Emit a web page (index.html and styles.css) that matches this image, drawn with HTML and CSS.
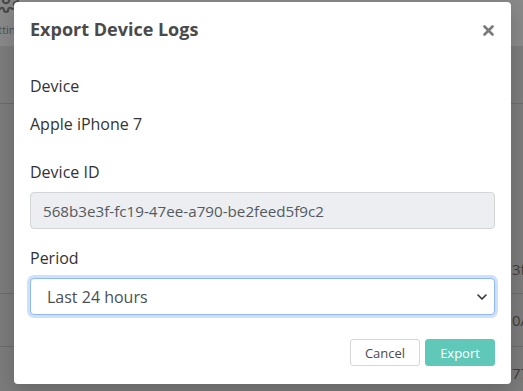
FILE: index.html
```html
<!DOCTYPE html>
<html lang="en">

<head>
    <meta charset="UTF-8">
    <meta name="viewport" content="width=device-width, initial-scale=1.0">
    <title>Export Device Logs</title>
    <link rel="stylesheet" href="styles.css">
</head>

<body>
    <div class="page">
        <div class="topbar">
            <div class="nav-item">
                <svg class="gear" width="26" height="26" viewBox="0 0 24 24" fill="none" stroke="currentColor" stroke-width="2" stroke-linecap="round" stroke-linejoin="round">
                    <circle cx="12" cy="12" r="3"></circle>
                    <path d="M19.4 15a1.65 1.65 0 0 0 .33 1.820l.06.06a2 2 0 1 1-2.83 2.83l-.06-.06a1.65 1.65 0 0 0-1.82-.33 1.65 1.65 0 0 0-1 1.51V21a2 2 0 1 1-4 0v-.09A1.65 1.65 0 0 0 9 19.4a1.65 1.65 0 0 0-1.82.33l-.06.06a2 2 0 1 1-2.83-2.83l.06-.06A1.65 1.65 0 0 0 4.68 15a1.65 1.65 0 0 0-1.51-1H3a2 2 0 1 1 0-4h.09A1.65 1.65 0 0 0 4.6 9a1.65 1.65 0 0 0-.33-1.82l-.06-.06a2 2 0 1 1 2.83-2.830l.06.06A1.65 1.65 0 0 0 9 4.68a1.65 1.65 0 0 0 1-1.51V3a2 2 0 1 1 4 0v.09a1.65 1.65 0 0 0 1 1.51 1.65 1.65 0 0 0 1.82-.33l.06-.06a2 2 0 1 1 2.83 2.83l-.06.06A1.65 1.65 0 0 0 19.4 9a1.65 1.65 0 0 0 1.51 1H21a2 2 0 1 1 0 4h-.09a1.65 1.65 0 0 0-1.51 1z"></path>
                </svg>
                <span>Settings</span>
            </div>
        </div>
        <div class="table-head"></div>
        <div class="row row-tall"><span>3f</span></div>
        <div class="row"><span>0A</span></div>
        <div class="row"><span>77</span></div>
    </div>

    <div class="modal">
        <div class="modal-header">
            <h5 class="modal-title">Export Device Logs</h5>
            <button class="close" type="button">
                <svg width="11" height="11" viewBox="0 0 11 11">
                    <path d="M1.5 1.5L9.5 9.5M9.5 1.5L1.5 9.5" stroke="#7a7a7a" stroke-width="2.6" stroke-linecap="round"></path>
                </svg>
            </button>
        </div>

        <div class="modal-body">
            <div class="form-group first">
                <label>Device</label>
                <div class="plain-text">Apple iPhone 7</div>
            </div>

            <div class="form-group">
                <label>Device ID</label>
                <input class="form-control" type="text" value="568b3e3f-fc19-47ee-a790-be2feed5f9c2" readonly>
            </div>

            <div class="form-group last">
                <label>Period</label>
                <div class="select-wrap">
                    <select class="form-control select-focus">
                        <option>Last 24 hours</option>
                        <option>Last 7 days</option>
                        <option>Last 30 days</option>
                    </select>
                    <svg class="chevron" width="10" height="6" viewBox="0 0 10 6">
                        <path d="M1 1l4 4 4-4" fill="none" stroke="#333" stroke-width="1.6" stroke-linecap="round" stroke-linejoin="round"></path>
                    </svg>
                </div>
            </div>
        </div>

        <div class="modal-footer">
            <button class="btn btn-cancel" type="button">Cancel</button>
            <button class="btn btn-export" type="button">Export</button>
        </div>
    </div>
</body>

</html>
```

FILE: styles.css
```css
body {
    margin: 0;
    font-family: "Open Sans", "Noto Sans", sans-serif;
    background-color: #7b7b7b;
    overflow: hidden;
    height: 391px;
}

.page {
    display: flex;
    flex-direction: column;
}

.topbar {
    height: 46px;
    background-color: #898989;
    display: flex;
}

.nav-item {
    display: flex;
    flex-direction: column;
    align-items: center;
    margin-left: -14px;
    margin-top: -13px;
    color: #4a4a4a;
}

.nav-item span {
    font-size: 11px;
    margin-top: 9px;
    color: #505050;
}

.table-head {
    height: 57px;
    background-color: #7c7c7c;
    border-bottom: 1px solid #6c6c6c;
}

.row {
    height: 52px;
    border-bottom: 1px solid #6c6c6c;
    display: flex;
    align-items: center;
    padding-left: 512px;
    font-size: 15px;
    color: #3e3e3e;
    white-space: nowrap;
}

.row-tall {
    height: 190px;
    align-items: flex-end;
    padding-bottom: 14px;
    box-sizing: border-box;
}

.modal {
    position: absolute;
    left: 14px;
    top: 2px;
    width: 497px;
    height: 382px;
    background-color: white;
    border-radius: 4px;
    box-shadow: 0 6px 20px rgba(0, 0, 0, 0.18);
    display: flex;
    flex-direction: column;
    color: #333;
}

.modal-header {
    display: flex;
    justify-content: space-between;
    align-items: center;
    padding: 14px 16px;
}

.modal-title {
    margin: 0;
    font-size: 18px;
    font-weight: 700;
    line-height: 27px;
    color: #4a4a4a;
}

.close {
    border: none;
    background: none;
    padding: 0;
    margin-right: 1px;
    margin-top: 2px;
    display: flex;
    cursor: pointer;
}

.modal-body {
    padding: 17px 16px 0;
}

.form-group {
    display: flex;
    flex-direction: column;
    margin-bottom: 17px;
}

.form-group.first {
    margin-bottom: 18px;
}

.form-group.last {
    margin-bottom: 24px;
}

label {
    font-size: 16px;
    line-height: 24px;
    margin-bottom: 8px;
    color: #333;
}

.plain-text {
    font-size: 16px;
    line-height: 24px;
    padding: 6px 0;
    color: #333;
}

.form-control {
    box-sizing: border-box;
    height: 37px;
    width: 100%;
    border: 1px solid #d2d4d8;
    border-radius: 4px;
    padding: 0 12px;
    font-family: inherit;
    font-size: 15.2px;
    color: #555a60;
    background-color: #eceef1;
    outline: none;
}

.select-wrap {
    position: relative;
}

.select-focus {
    appearance: none;
    -webkit-appearance: none;
    background-color: white;
    border-color: #8fb8f7;
    box-shadow: 0 0 0 3px #cfe0fb;
    padding-left: 16px;
    font-size: 16px;
    color: #4a4f55;
}

.chevron {
    position: absolute;
    right: 8px;
    top: 16px;
    pointer-events: none;
}

.modal-footer {
    display: flex;
    justify-content: flex-end;
    gap: 5px;
    padding: 0 16px;
}

.btn {
    box-sizing: border-box;
    width: 70px;
    height: 27px;
    border-radius: 3px;
    font-family: inherit;
    font-size: 13px;
    cursor: pointer;
    padding: 0;
}

.btn-cancel {
    background-color: white;
    border: 1px solid #d6d6d6;
    color: #4a4a4a;
}

.btn-export {
    background-color: #5fc8b8;
    border: 1px solid #5fc8b8;
    color: white;
}
```
